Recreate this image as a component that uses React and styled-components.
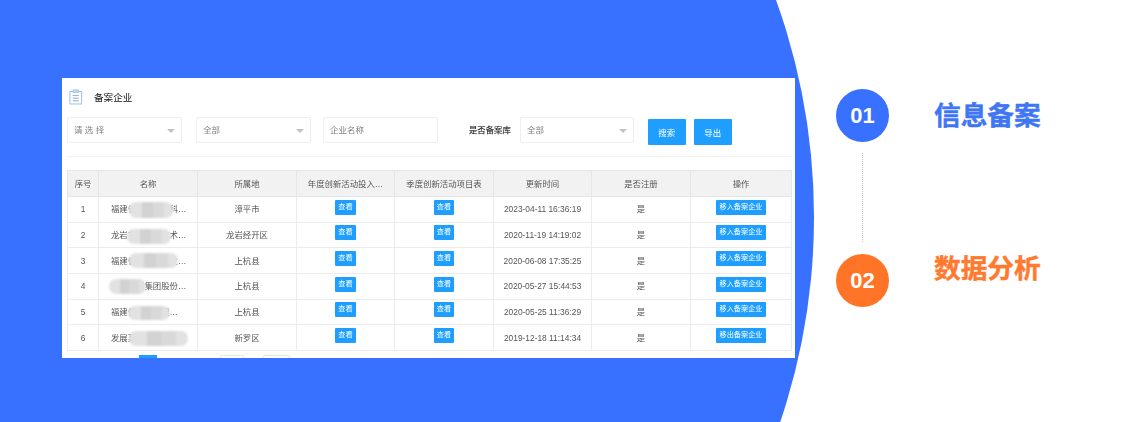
import styled, { createGlobalStyle } from "styled-components";

const GlobalStyle = createGlobalStyle`
  html, body {
    margin: 0;
    padding: 0;
    background: #fff;
    overflow: hidden;
  }
  body {
    font-family: "Liberation Sans", "Noto Sans CJK SC", sans-serif;
  }
`;

const rows = [
  { no: 1, name: "福建省龙岩市某科…", area: "漳平市", time: "2023-04-11 16:36:19", action: "移入备案企业", blob: [30, 44, 5, 16] },
  { no: 2, name: "龙岩市某高新技术…", area: "龙岩经开区", time: "2020-11-19 14:19:02", action: "移入备案企业", blob: [28, 44, 6, 15] },
  { no: 3, name: "福建省某某科技发…", area: "上杭县", time: "2020-06-08 17:35:25", action: "移入备案企业", blob: [30, 49, 5, 15] },
  { no: 4, name: "龙岩某某集团股份…", area: "上杭县", time: "2020-05-27 15:44:53", action: "移入备案企业", blob: [10, 37, 5, 15] },
  { no: 5, name: "福建省某某有限…", area: "上杭县", time: "2020-05-25 11:36:29", action: "移入备案企业", blob: [29, 42, 6, 14] },
  { no: 6, name: "发展某某某某某有限", area: "新罗区", time: "2019-12-18 11:14:34", action: "移出备案企业", blob: [30, 59, 6, 15] },
];

function ClipboardIcon() {
  return (
    <svg width="14" height="16" viewBox="0 0 15 17" fill="none" stroke="#9cc3e6" strokeWidth="1.1">
      <rect x="1" y="2.5" width="12.5" height="13.5" rx="0.5" />
      <rect x="4.5" y="1" width="5.5" height="2.6" fill="#cfe2f3" />
      <path d="M4 7h6.5M4 9.8h6.5M4 12.6h6.5" stroke="#6f8fa8" strokeWidth="0.8" />
    </svg>
  );
}

export default function App() {
  return (
    <Page>
      <GlobalStyle />
      <BluePanel>
        <Card>
          <TitleRow>
            <ClipboardIcon />
            <Title>备案企业</Title>
          </TitleRow>
          <FilterRow>
            <SelectBox $width={115} $gap={14}>请 选 择</SelectBox>
            <SelectBox $width={115} $gap={12}>全部</SelectBox>
            <InputBox>企业名称</InputBox>
            <FilterLabel>是否备案库</FilterLabel>
            <SelectBox $width={114} $gap={14}>全部</SelectBox>
            <ActionButton>搜索</ActionButton>
            <ActionButton>导出</ActionButton>
          </FilterRow>
          <Divider />
          <Table>
            <colgroup>
              <col width="31" />
              <col width="99" />
              <col width="99" />
              <col width="98" />
              <col width="99" />
              <col width="98" />
              <col width="99" />
              <col width="101" />
            </colgroup>
            <thead>
              <tr>
                <Th>序号</Th>
                <Th>名称</Th>
                <Th>所属地</Th>
                <Th>年度创新活动投入…</Th>
                <Th>季度创新活动项目表</Th>
                <Th>更新时间</Th>
                <Th>是否注册</Th>
                <Th>操作</Th>
              </tr>
            </thead>
            <tbody>
              {rows.map((row) => (
                <tr key={row.no}>
                  <Td>{row.no}</Td>
                  <NameCell>
                    {row.name}
                    <Blur
                      style={{
                        left: row.blob[0],
                        width: row.blob[1],
                        top: row.blob[2],
                        height: row.blob[3],
                      }}
                    />
                  </NameCell>
                  <Td>{row.area}</Td>
                  <Td>
                    <SmallButton>查看</SmallButton>
                  </Td>
                  <Td>
                    <SmallButton>查看</SmallButton>
                  </Td>
                  <Td>{row.time}</Td>
                  <Td>是</Td>
                  <Td>
                    <SmallButton>{row.action}</SmallButton>
                  </Td>
                </tr>
              ))}
            </tbody>
          </Table>
          <Pagination>
            <PageActive />
            <PageBox $width={24} $gap={63} />
            <PageBox $width={27} $gap={19} />
          </Pagination>
        </Card>
      </BluePanel>
      <Steps>
        <Step>
          <StepBadge $color="#3870ff">01</StepBadge>
          <StepTitle $color="#3f76f5" $top={12}>信息备案</StepTitle>
        </Step>
        <Connector />
        <Step>
          <StepBadge $color="#ff7427">02</StepBadge>
          <StepTitle $color="#ff7a2e" $top={0}>数据分析</StepTitle>
        </Step>
      </Steps>
    </Page>
  );
}

const Page = styled.div`
  display: flex;
  width: 1146px;
  height: 422px;
  background: #fff;
  overflow: hidden;
`;

const BluePanel = styled.div`
  flex: 0 0 814px;
  height: 422px;
  box-sizing: border-box;
  padding: 78px 0 0 62px;
  background: #3870ff;
  clip-path: circle(639px at 175px 217px);
`;

const Card = styled.div`
  width: 733px;
  height: 280px;
  box-sizing: border-box;
  padding: 0 4px 0 5px;
  background: #fff;
  overflow: hidden;
  filter: blur(0.3px);
`;

const TitleRow = styled.div`
  display: flex;
  align-items: center;
  height: 38px;
  margin-bottom: 1px;
  padding-left: 2px;
`;

const Title = styled.span`
  margin-left: 11px;
  font-size: 9.6px;
  color: #111;
`;

const FilterRow = styled.div`
  display: flex;
  align-items: flex-start;
  height: 26px;
`;

const fieldBox = `
  box-sizing: border-box;
  height: 26px;
  padding-left: 6px;
  border: 1px solid #eeeeee;
  border-radius: 2px;
  background: #fff;
  color: #808080;
  font-size: 8.5px;
  line-height: 24px;
`;

const SelectBox = styled.div`
  ${fieldBox}
  position: relative;
  width: ${({ $width }) => $width}px;
  margin-right: ${({ $gap }) => $gap}px;

  &::after {
    content: "";
    position: absolute;
    right: 6px;
    top: 11px;
    border: 4px solid transparent;
    border-top: 4px solid #c2c2c2;
    border-bottom: 0;
    width: 0;
    height: 0;
  }
`;

const InputBox = styled.div`
  ${fieldBox}
  width: 115px;
`;

const FilterLabel = styled.span`
  margin: 0 9px 0 31px;
  font-size: 8.4px;
  line-height: 26px;
  color: #222;
  white-space: nowrap;
  -webkit-text-stroke: 0.15px #222;
`;

const ActionButton = styled.button`
  box-sizing: border-box;
  width: 38px;
  height: 26px;
  margin: 2px 8px 0 0;
  padding: 0;
  border: none;
  border-radius: 1px;
  background: #1e9fff;
  color: #fff;
  font-family: inherit;
  font-size: 8.5px;
`;

const Divider = styled.div`
  height: 1px;
  margin: 13px 0;
  background: #f0f0f0;
`;

const Table = styled.table`
  width: 724px;
  table-layout: fixed;
  border-collapse: collapse;
  font-size: 8.4px;
  line-height: 12px;
  color: #555;
`;

const Th = styled.th`
  box-sizing: border-box;
  height: 26px;
  padding: 0;
  border: 1px solid #e6e6e6;
  background: #f2f2f2;
  font-weight: normal;
  text-align: center;
  white-space: nowrap;
  overflow: hidden;
`;

const Td = styled.td`
  box-sizing: border-box;
  height: 25.67px;
  padding: 0;
  border: 1px solid #ececec;
  text-align: center;
  white-space: nowrap;
`;

const NameCell = styled(Td)`
  position: relative;
  padding-left: 12px;
  text-align: left;
  overflow: hidden;
`;

const Blur = styled.span`
  position: absolute;
  border-radius: 7px;
  background: linear-gradient(
    90deg,
    #e2e2e2 0 30%,
    #d2d2d2 30% 55%,
    #d9d9d9 55% 80%,
    #e2e2e2 80%
  );
  filter: blur(1px);
`;

const SmallButton = styled.span`
  display: block;
  width: fit-content;
  box-sizing: border-box;
  height: 15px;
  margin: -4px auto 0;
  padding: 0 3.2px;
  border-radius: 1px;
  background: #1e9fff;
  color: #fff;
  font-size: 7.15px;
  line-height: 15px;
`;

const Pagination = styled.div`
  display: flex;
  margin: 4px 0 0 72px;
`;

const PageActive = styled.div`
  width: 18px;
  height: 20px;
  background: #1e9fff;
`;

const PageBox = styled.div`
  box-sizing: border-box;
  width: ${({ $width }) => $width}px;
  height: 20px;
  margin-left: ${({ $gap }) => $gap}px;
  border: 1px solid #e6e6e6;
  border-radius: 2px;
`;

const Steps = styled.div`
  display: flex;
  flex-direction: column;
  padding: 89px 0 0 22px;
`;

const Step = styled.div`
  display: flex;
  align-items: flex-start;
  gap: 45px;
`;

const StepBadge = styled.div`
  flex: 0 0 53px;
  height: 53px;
  border-radius: 50%;
  background: ${({ $color }) => $color};
  color: #fff;
  font-size: 22px;
  font-weight: 700;
  line-height: 53px;
  text-align: center;
`;

const StepTitle = styled.div`
  margin-top: ${({ $top }) => $top}px;
  font-size: 26.7px;
  font-weight: 700;
  line-height: 30px;
  white-space: nowrap;
  color: ${({ $color }) => $color};
  -webkit-text-stroke: 0.4px ${({ $color }) => $color};
`;

const Connector = styled.div`
  width: 0;
  height: 89px;
  margin: 11px 0 12px 26px;
  border-left: 1px dotted #c4c4c4;
`;
